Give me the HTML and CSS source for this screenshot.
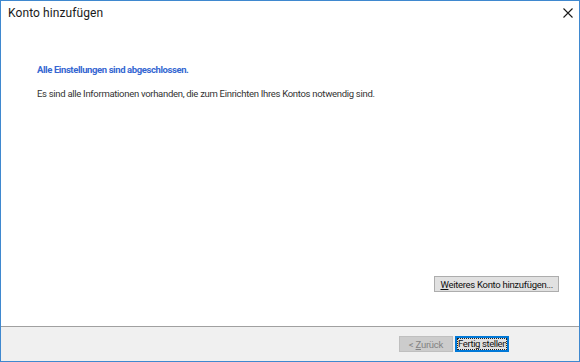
FILE: index.html
```html
<!DOCTYPE html>
<html lang="de">
<head>
    <meta charset="UTF-8">
    <title>Konto hinzufügen</title>
    <link rel="stylesheet" href="styles.css">
</head>
<body>
    <div class="window">
        <div class="titlebar">
            <span class="title">Konto hinzufügen</span>
            <span class="close">
                <svg width="10" height="10" viewBox="0 0 10 10">
                    <path d="M0.5 0.5 L9.5 9.5 M9.5 0.5 L0.5 9.5" stroke="#1a1a1a" stroke-width="1.1" fill="none"/>
                </svg>
            </span>
        </div>

        <div class="content">
            <p class="heading">Alle Einstellungen sind abgeschlossen.</p>
            <p class="info">Es sind alle Informationen vorhanden, die zum Einrichten Ihres Kontos notwendig sind.</p>

            <div class="extra">
                <button class="btn btn-more"><u>W</u>eiteres Konto hinzufügen...</button>
            </div>
        </div>

        <div class="footer">
            <button class="btn btn-disabled">&lt; <u>Z</u>urück</button>
            <button class="btn btn-default"><span class="focus">Fertig stellen</span></button>
        </div>
    </div>
</body>
</html>
```

FILE: styles.css
```css
* {
    margin: 0;
    padding: 0;
    box-sizing: border-box;
}

body {
    font-family: Roboto, 'Noto Sans', sans-serif;
    background: #ffffff;
    color: #333333;
}

.window {
    width: 580px;
    height: 362px;
    border: 1px solid #3f88cf;
    display: flex;
    flex-direction: column;
    background: #ffffff;
}

.titlebar {
    height: 24px;
    display: flex;
    align-items: center;
    justify-content: space-between;
    padding: 0 6px 0 7px;
}

.title {
    font-size: 12px;
    letter-spacing: 0.1px;
    color: #1a1a1a;
}

.close {
    display: flex;
    width: 10px;
    height: 10px;
}

.content {
    flex: 1;
    display: flex;
    flex-direction: column;
    padding: 39px 20px 0 36px;
}

.heading {
    font-size: 9.5px;
    font-weight: 700;
    letter-spacing: -0.4px;
    color: #3567d2;
    margin-bottom: 13px;
}

.info {
    font-size: 9.5px;
    letter-spacing: -0.3px;
    color: #333333;
}

.extra {
    margin-top: auto;
    margin-bottom: 34px;
    display: flex;
    justify-content: flex-end;
}

.btn {
    font-family: Roboto, 'Noto Sans', sans-serif;
    font-size: 9.5px;
    letter-spacing: -0.25px;
    color: #111111;
    background: #e1e1e1;
    border: 1px solid #adadad;
    height: 16px;
    padding: 0 6px;
    line-height: 13px;
    white-space: nowrap;
}

.btn u {
    text-decoration: underline;
}

.btn-more {
    padding: 0 5px;
    letter-spacing: -0.3px;
}

.footer {
    height: 35px;
    border-top: 1px solid #a0a0a0;
    background: #f0f0f0;
    display: flex;
    align-items: center;
    justify-content: flex-end;
    gap: 2px;
    padding-right: 70px;
}

.btn-disabled {
    width: 54px;
    background: #cccccc;
    border-color: #bfbfbf;
    color: #838383;
}

.btn-default {
    width: 54px;
    border: 2px solid #0078d7;
    padding: 0;
    overflow: hidden;
    display: flex;
}

.focus {
    flex: 1;
    border: 1px dotted #222222;
    line-height: 10px;
    letter-spacing: -0.4px;
    text-align: left;
    overflow: hidden;
}
```
